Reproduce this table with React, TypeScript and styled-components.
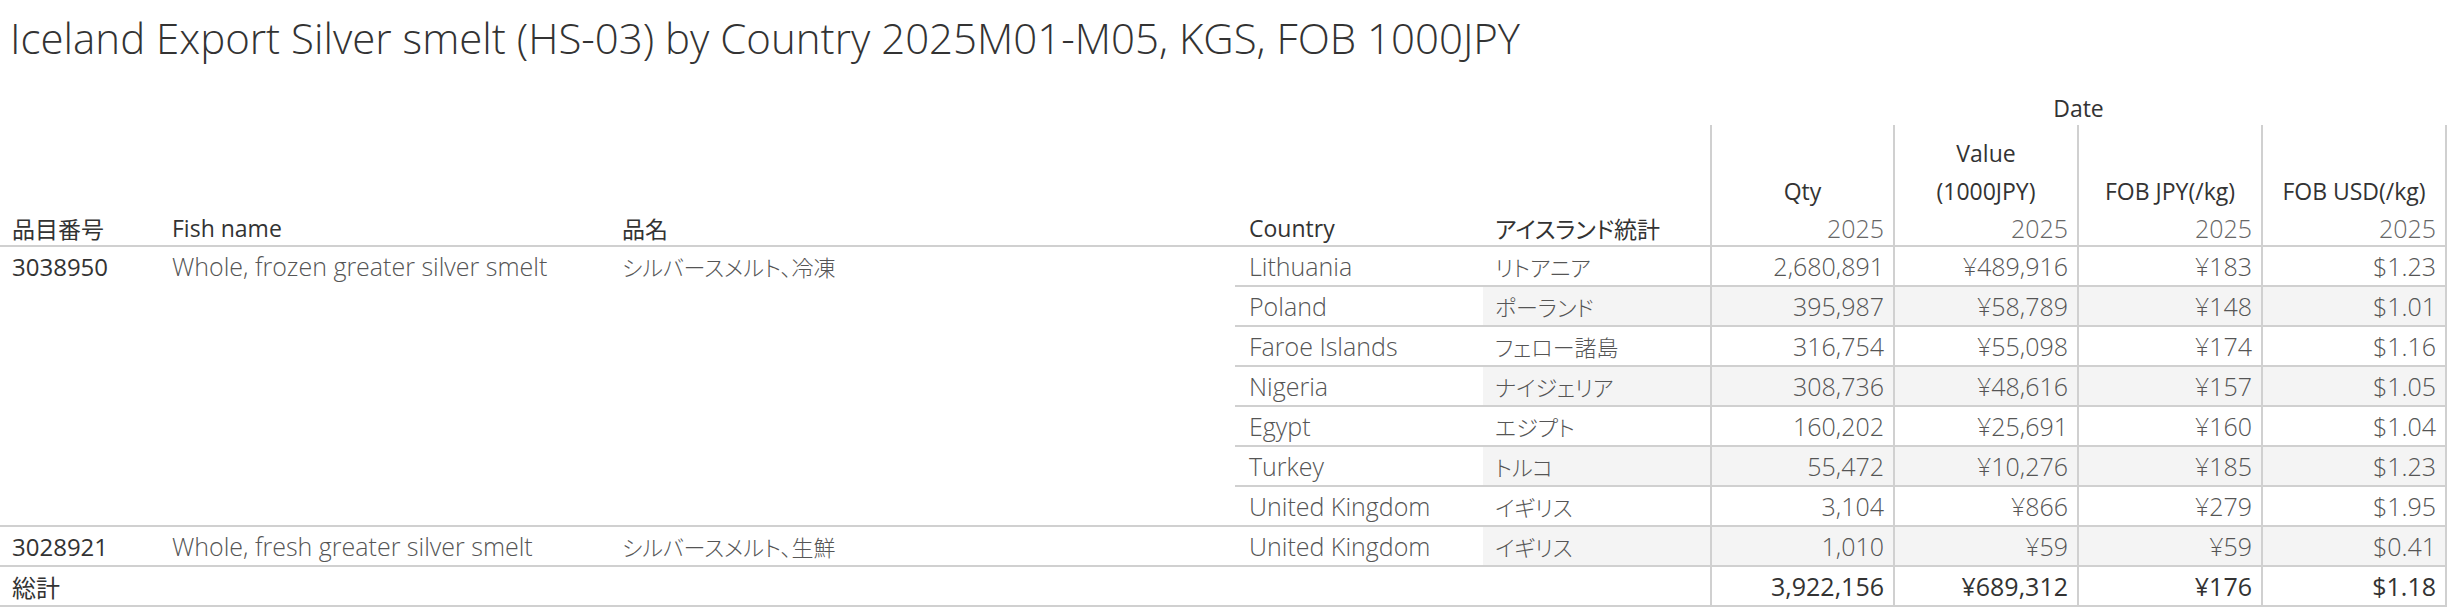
import React from "react";
import styled, { createGlobalStyle, css } from "styled-components";

type Row = {
  country: string;
  iceland: string;
  qty: string;
  value: string;
  fobJpy: string;
  fobUsd: string;
};

type Group = {
  code: string;
  fishName: string;
  jpName: string;
  rows: Row[];
};

const groups: Group[] = [
  {
    code: "3038950",
    fishName: "Whole, frozen greater silver smelt",
    jpName: "シルバースメルト、冷凍",
    rows: [
      { country: "Lithuania", iceland: "リトアニア", qty: "2,680,891", value: "¥489,916", fobJpy: "¥183", fobUsd: "$1.23" },
      { country: "Poland", iceland: "ポーランド", qty: "395,987", value: "¥58,789", fobJpy: "¥148", fobUsd: "$1.01" },
      { country: "Faroe Islands", iceland: "フェロー諸島", qty: "316,754", value: "¥55,098", fobJpy: "¥174", fobUsd: "$1.16" },
      { country: "Nigeria", iceland: "ナイジェリア", qty: "308,736", value: "¥48,616", fobJpy: "¥157", fobUsd: "$1.05" },
      { country: "Egypt", iceland: "エジプト", qty: "160,202", value: "¥25,691", fobJpy: "¥160", fobUsd: "$1.04" },
      { country: "Turkey", iceland: "トルコ", qty: "55,472", value: "¥10,276", fobJpy: "¥185", fobUsd: "$1.23" },
      { country: "United Kingdom", iceland: "イギリス", qty: "3,104", value: "¥866", fobJpy: "¥279", fobUsd: "$1.95" },
    ],
  },
  {
    code: "3028921",
    fishName: "Whole, fresh greater silver smelt",
    jpName: "シルバースメルト、生鮮",
    rows: [
      { country: "United Kingdom", iceland: "イギリス", qty: "1,010", value: "¥59", fobJpy: "¥59", fobUsd: "$0.41" },
    ],
  },
];

const totals = ["3,922,156", "¥689,312", "¥176", "$1.18"];

// column widths, summing to 2447
const DIM_COLS = "160px 450px 625px";
const SUB_COLS = "248px 227px 183px 184px 184px 186px";
const LINE = "#d0d0d0";
const FONT = `"Open Sans", "Noto Sans CJK JP", sans-serif`;

const App: React.FC = () => {
  let band = 0;
  return (
    <Page>
      <GlobalStyle />
      <Title>Iceland Export Silver smelt (HS-03) by Country 2025M01-M05, KGS, FOB 1000JPY</Title>

      <HeaderGrid>
        <DateLabel>Date</DateLabel>
        <MeasureName col={6}>Qty</MeasureName>
        <MeasureName col={7}>Value<br />(1000JPY)</MeasureName>
        <MeasureName col={8}>FOB JPY(/kg)</MeasureName>
        <MeasureName col={9} last>FOB USD(/kg)</MeasureName>
        <DimHeader col={1}>品目番号</DimHeader>
        <DimHeader col={2}>Fish name</DimHeader>
        <DimHeader col={3}>品名</DimHeader>
        <DimHeader col={4}>Country</DimHeader>
        <DimHeader col={5}>アイスランド統計</DimHeader>
        <YearCell col={6}>2025</YearCell>
        <YearCell col={7}>2025</YearCell>
        <YearCell col={8}>2025</YearCell>
        <YearCell col={9} last>2025</YearCell>
      </HeaderGrid>

      {groups.map((g) => (
        <GroupBlock key={g.code}>
          <CodeCell>{g.code}</CodeCell>
          <NameCell>{g.fishName}</NameCell>
          <NameCell jp>{g.jpName}</NameCell>
          <SubRows>
            {g.rows.map((r, i) => {
              const shaded = band++ % 2 === 1;
              return (
                <SubRow key={r.country + i} isLast={i === g.rows.length - 1}>
                  <CountryCell>{r.country}</CountryCell>
                  <IcelandCell shaded={shaded}>{r.iceland}</IcelandCell>
                  <ValueCell shaded={shaded}>{r.qty}</ValueCell>
                  <ValueCell shaded={shaded}>{r.value}</ValueCell>
                  <ValueCell shaded={shaded}>{r.fobJpy}</ValueCell>
                  <ValueCell shaded={shaded} last>{r.fobUsd}</ValueCell>
                </SubRow>
              );
            })}
          </SubRows>
        </GroupBlock>
      ))}

      <TotalRow>
        <TotalLabel>総計</TotalLabel>
        {totals.map((t, i) => (
          <ValueCell key={t} total last={i === totals.length - 1}>{t}</ValueCell>
        ))}
      </TotalRow>
    </Page>
  );
};

export default App;

// ------------------ Styled Components ------------------

const GlobalStyle = createGlobalStyle`
  html, body {
    margin: 0;
    padding: 0;
    background: #ffffff;
  }
  * {
    box-sizing: border-box;
  }
`;

const Page = styled.div`
  width: 2450px;
  font-family: ${FONT};
  font-feature-settings: "palt";
  color: #333333;
`;

const Title = styled.h1`
  margin: 0;
  height: 75px;
  padding: 14px 0 0 10px;
  font-family: ${FONT};
  font-size: 42px;
  font-weight: 300;
  line-height: 48px;
  color: #333333;
  white-space: nowrap;
`;

const HeaderGrid = styled.div`
  display: grid;
  grid-template-columns: ${DIM_COLS} ${SUB_COLS};
  grid-template-rows: 50px 85px 35px;
  width: 2447px;
  border-bottom: 2px solid ${LINE};
  font-size: 23px;
`;

const DateLabel = styled.div`
  grid-column: 6 / 10;
  grid-row: 1;
  align-self: end;
  text-align: center;
  line-height: 34px;
  color: #333333;
`;

// vertical rules between measure columns
const measureRules = css<{ last?: boolean }>`
  border-left: 2px solid ${LINE};
  ${({ last }) => last && `border-right: 2px solid ${LINE};`}
`;

const MeasureName = styled.div<{ col: number; last?: boolean }>`
  grid-column: ${({ col }) => col};
  grid-row: 2;
  display: flex;
  align-items: flex-end;
  justify-content: center;
  text-align: center;
  line-height: 38px;
  color: #333333;
  white-space: nowrap;
  ${measureRules}
`;

const DimHeader = styled.div<{ col: number }>`
  grid-column: ${({ col }) => col};
  grid-row: 3;
  align-self: center;
  padding-left: ${({ col }) => (col === 4 ? 14 : 12)}px;
  color: #333333;
  white-space: nowrap;
`;

const YearCell = styled.div<{ col: number; last?: boolean }>`
  grid-column: ${({ col }) => col};
  grid-row: 3;
  display: flex;
  align-items: center;
  justify-content: flex-end;
  padding-right: 9px;
  font-size: 25px;
  font-weight: 300;
  color: #666666;
  ${measureRules}
`;

const GroupBlock = styled.div`
  display: grid;
  grid-template-columns: ${DIM_COLS} 1fr;
  width: 2447px;
  border-bottom: 2px solid ${LINE};
`;

const CodeCell = styled.div`
  height: 38px;
  display: flex;
  align-items: center;
  padding-left: 12px;
  font-size: 24px;
  color: #333333;
`;

const NameCell = styled.div<{ jp?: boolean }>`
  height: 38px;
  display: flex;
  align-items: center;
  padding-left: 12px;
  font-size: ${({ jp }) => (jp ? 22 : 25)}px;
  font-weight: 300;
  color: #555555;
  white-space: nowrap;
`;

const SubRows = styled.div`
  display: flex;
  flex-direction: column;
`;

const SubRow = styled.div<{ isLast: boolean }>`
  display: grid;
  grid-template-columns: ${SUB_COLS};
  height: ${({ isLast }) => (isLast ? 38 : 40)}px;
  border-bottom: ${({ isLast }) => (isLast ? "none" : `2px solid ${LINE}`)};
`;

const CountryCell = styled.div`
  display: flex;
  align-items: center;
  padding-left: 14px;
  font-size: 25px;
  font-weight: 300;
  color: #555555;
  white-space: nowrap;
`;

const IcelandCell = styled.div<{ shaded?: boolean }>`
  display: flex;
  align-items: center;
  padding-left: 12px;
  font-size: 22px;
  font-weight: 300;
  color: #555555;
  background: ${({ shaded }) => (shaded ? "#f4f4f4" : "transparent")};
  white-space: nowrap;
`;

const ValueCell = styled.div<{ shaded?: boolean; last?: boolean; total?: boolean }>`
  display: flex;
  align-items: center;
  justify-content: flex-end;
  padding-right: 9px;
  font-size: 25px;
  font-weight: ${({ total }) => (total ? 400 : 300)};
  color: ${({ total }) => (total ? "#333333" : "#555555")};
  background: ${({ shaded }) => (shaded ? "#f4f4f4" : "transparent")};
  ${measureRules}
`;

const TotalRow = styled.div`
  display: grid;
  grid-template-columns: 1710px 183px 184px 184px 186px;
  width: 2447px;
  height: 40px;
  border-bottom: 2px solid ${LINE};
`;

const TotalLabel = styled.div`
  display: flex;
  align-items: center;
  padding-left: 12px;
  font-size: 24px;
  color: #333333;
`;
